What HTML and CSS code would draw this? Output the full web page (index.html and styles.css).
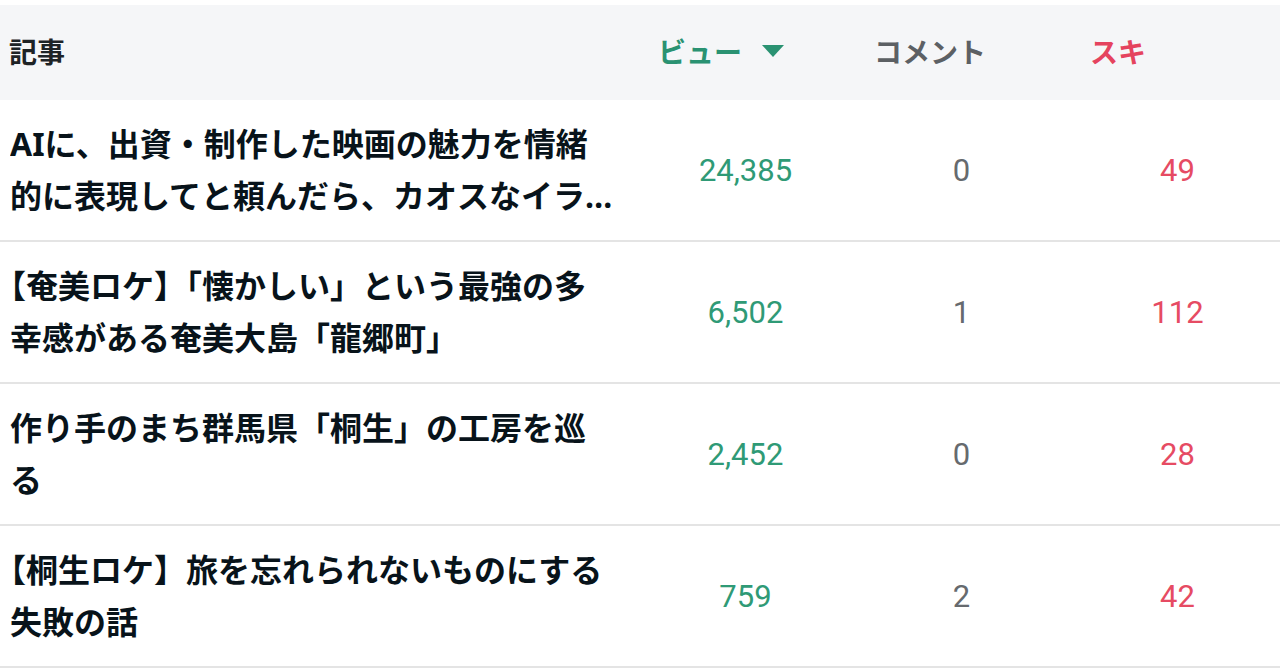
FILE: index.html
```html
<!DOCTYPE html>
<html lang="ja">
<head>
<meta charset="utf-8">
<title>記事</title>
<link rel="stylesheet" href="styles.css">
</head>
<body>
<div class="table">
  <div class="row head">
    <div class="cell title-h">記事</div>
    <div class="cell h views-h">ビュー <svg class="tri" width="22" height="12" viewBox="0 0 22 12"><path d="M0 0H22L11 12Z" fill="currentColor"/></svg></div>
    <div class="cell h comments-h">コメント</div>
    <div class="cell h likes-h">スキ</div>
  </div>
  <div class="row">
    <div class="cell title"><p class="clamp">AIに、出資・制作した映画の魅力を情緒的に表現してと頼んだら、カオスなイラストが生まれた話</p></div>
    <div class="cell num views">24,385</div>
    <div class="cell num comments">0</div>
    <div class="cell num likes">49</div>
  </div>
  <div class="row">
    <div class="cell title"><p class="clamp">【奄美ロケ】「懐かしい」という最強の多幸感がある奄美大島「龍郷町」</p></div>
    <div class="cell num views">6,502</div>
    <div class="cell num comments">1</div>
    <div class="cell num likes">112</div>
  </div>
  <div class="row">
    <div class="cell title"><p class="clamp">作り手のまち群馬県「桐生」の工房を巡る</p></div>
    <div class="cell num views">2,452</div>
    <div class="cell num comments">0</div>
    <div class="cell num likes">28</div>
  </div>
  <div class="row">
    <div class="cell title"><p class="clamp">【桐生ロケ】旅を忘れられないものにする失敗の話</p></div>
    <div class="cell num views">759</div>
    <div class="cell num comments">2</div>
    <div class="cell num likes">42</div>
  </div>
</div>
</body>
</html>
```
FILE: styles.css
```css
html, body {
  margin: 0;
  padding: 0;
  background: #ffffff;
}
body {
  font-family: "Noto Sans CJK JP", "Noto Sans", sans-serif;
  color: #08131a;
}
.table {
  padding-top: 5px;
}
.row {
  display: grid;
  grid-template-columns: 607px 175px 175px 175px;
  column-gap: 41px;
  align-items: center;
  height: 140px;
  padding-left: 10px;
  border-bottom: 2px solid #e4e4e4;
}
.row.head {
  height: 95px;
  padding-bottom: 0;
  background: #f5f6f8;
  border-bottom: none;
}
.head .cell {
  padding-bottom: 4px;
}
.cell.title-h {
  font-size: 28px;
  font-weight: 700;
  color: #1e2326;
  margin-left: -1px;
}
.cell.h {
  font-size: 28px;
  font-weight: 700;
  display: flex;
  align-items: center;
}
.views-h {
  color: #2a9272;
}
.tri {
  margin-left: 20px;
  color: #2a9272;
}
.comments-h {
  color: #5c6064;
}
.likes-h {
  color: #e5435e;
}
.title p {
  margin: 0;
  width: 605px;
  font-family: "Noto Sans", "Noto Sans CJK JP", sans-serif;
  font-size: 32px;
  font-weight: 700;
  line-height: 52px;
  text-spacing-trim: trim-start;
}
.clamp {
  display: -webkit-box;
  -webkit-box-orient: vertical;
  -webkit-line-clamp: 2;
  overflow: hidden;
}
.num {
  font-family: Roboto, "Noto Sans", sans-serif;
  font-size: 31px;
  text-align: center;
}
.views {
  color: #2f9a76;
}
.comments {
  color: #666a6e;
}
.likes {
  color: #e64b63;
}
```
